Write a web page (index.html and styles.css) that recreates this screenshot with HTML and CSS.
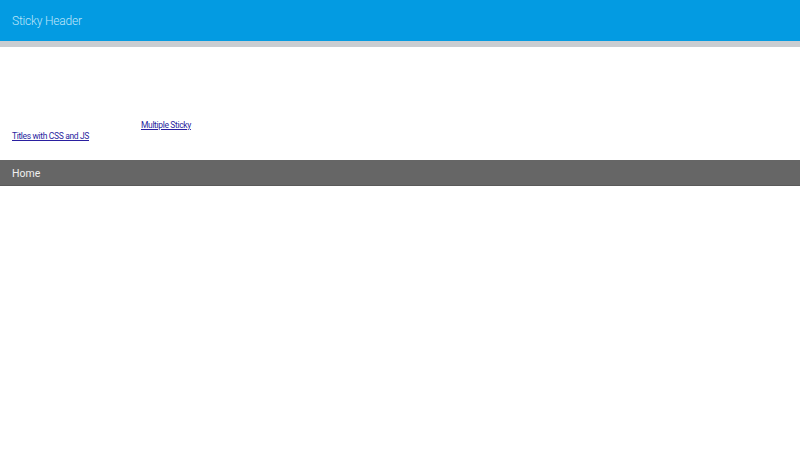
FILE: index.html
```html
<!DOCTYPE html>
<html>
<head>
<meta charset="utf-8">
<link rel="stylesheet" href="styles.css">
</head>
<body>
<header class="topbar">
  <h1 class="title">Sticky Header</h1>
</header>
<div class="strip"></div>
<main class="intro">
  <p class="links"><span class="spacer"></span><a href="#">Multiple Sticky Titles with CSS and JS</a></p>
</main>
<nav class="navbar">
  <span class="nav-item">Home</span>
</nav>
</body>
</html>
```
FILE: styles.css
```css
html, body {
  margin: 0;
  padding: 0;
  background: #ffffff;
  font-family: Roboto, "Open Sans", "Noto Sans", sans-serif;
}
.topbar {
  height: 41px;
  background: #039be2;
  display: flex;
  align-items: center;
  padding: 0 12px;
}
.title {
  margin: 0;
  font-size: 12px;
  font-weight: 300;
  letter-spacing: -0.2px;
  color: #bfe6fa;
}
.strip {
  height: 6px;
  background: #c9cdd1;
}
.intro {
  height: 113px;
  padding: 0 12px;
  display: flex;
  align-items: flex-end;
}
.links {
  margin: 0 0 18px;
  width: 190px;
  font-size: 8.5px;
  line-height: 11px;
  letter-spacing: -0.35px;
}
.spacer {
  display: inline-block;
  width: 129px;
}
.links a {
  color: #2a1fa0;
  text-decoration: underline;
}
.navbar {
  height: 25px;
  background: #666666;
  display: flex;
  align-items: center;
  padding: 0 12px;
  border-bottom: 1px solid #5a5a5a;
}
.nav-item {
  color: #f0f0f0;
  font-size: 10.5px;
  padding-top: 1px;
}
```
